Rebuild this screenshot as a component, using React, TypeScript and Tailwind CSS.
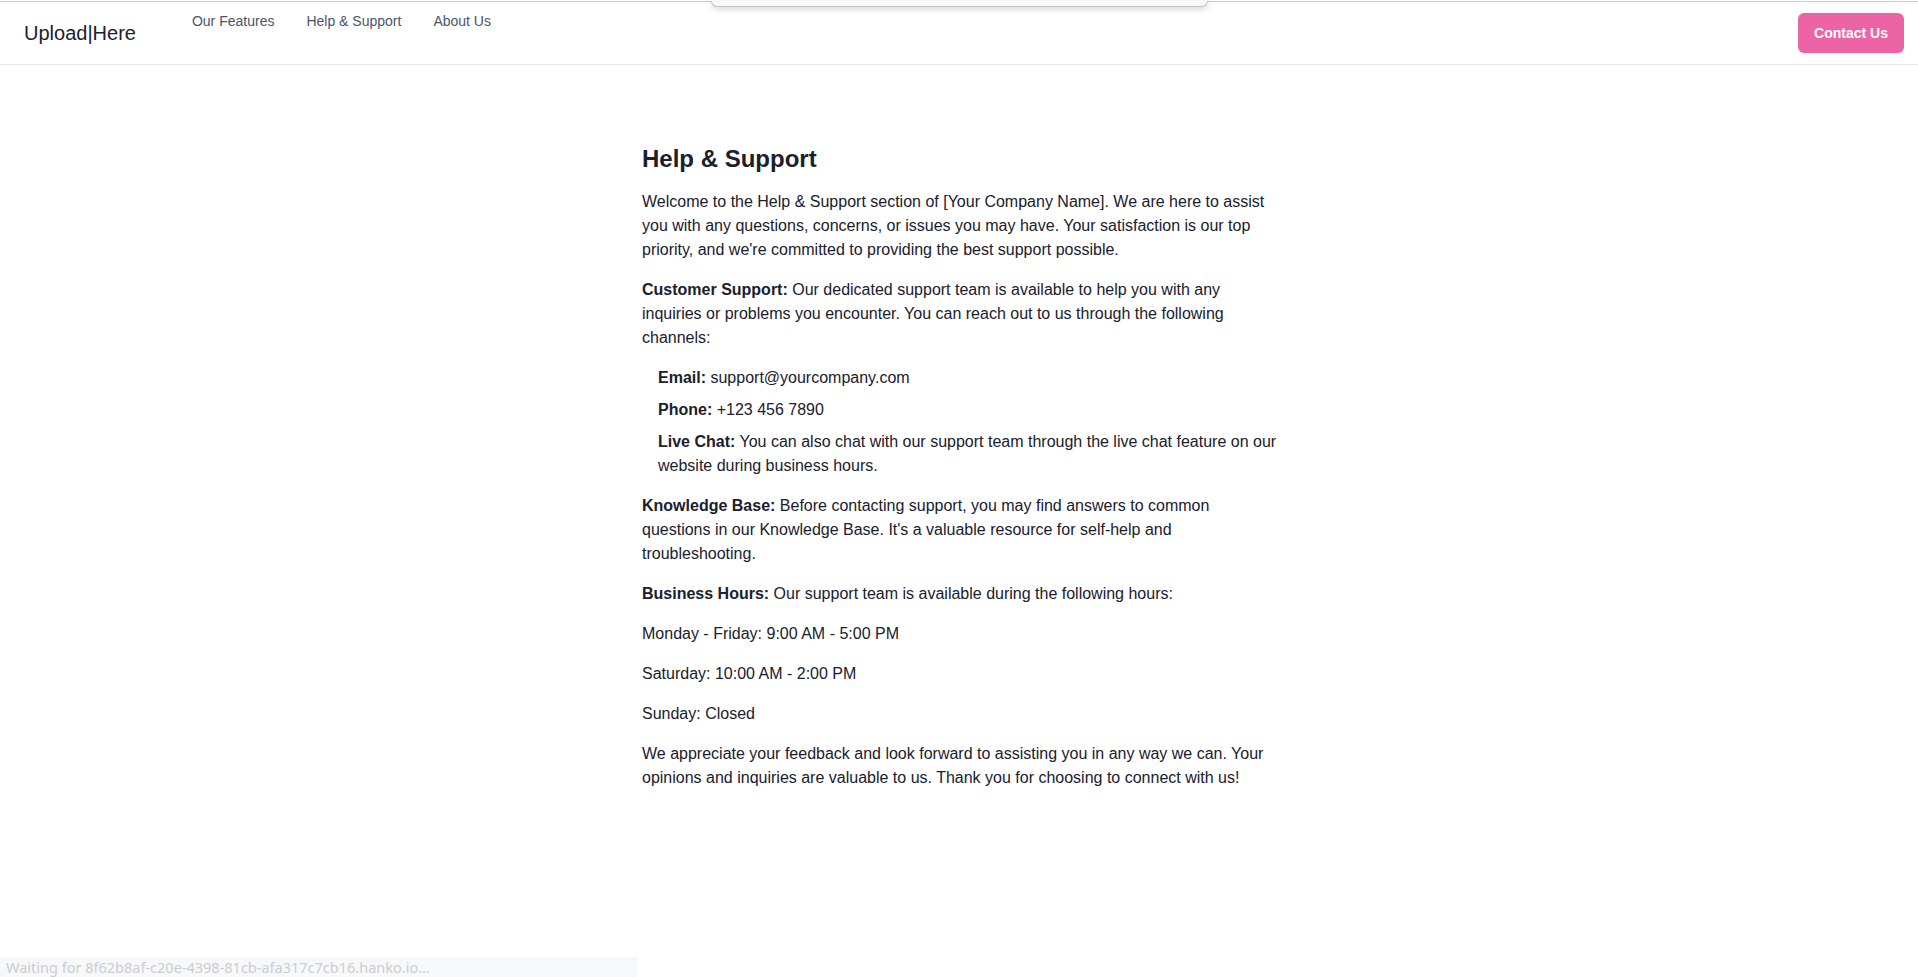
import React from "react";

export default function App() {
  const font = { fontFamily: '"Liberation Sans", Arial, Helvetica, sans-serif' };
  return (
    <div className="relative min-h-[977px] bg-white text-[#1A202C]" style={font}>
      {/* browser top line */}
      <div className="h-px mt-px bg-[#c9c9c9]" />
      {/* popup remnant */}
      <div className="absolute left-[711px] top-0 w-[497px] h-[6px] bg-[#f9f9f9] border-b border-x border-[#c4c4c4] rounded-b-[6px] shadow-[0_2px_6px_rgba(0,0,0,0.18)]" />

      {/* header */}
      <header className="h-[63px] border-b border-[#E2E8F0] flex items-center pl-[24px] pr-[14px]">
        <div className="text-[20px] leading-[28px] text-[#1A202C]">Upload|Here</div>
        <nav className="self-start pt-px ml-[48px] flex gap-4">
          {["Our Features", "Help & Support", "About Us"].map((t) => (
            <a key={t} className="p-2 text-[14px] leading-[20px] text-[#4A5568]" href="#">
              {t}
            </a>
          ))}
        </nav>
        <div className="flex-1" />
        <button className="h-[40px] w-[106px] rounded-md bg-[#ED64A6] text-white text-[14px] font-bold">
          Contact Us
        </button>
      </header>

      {/* content */}
      <main className="pt-20 pl-[2px] flex justify-center">
        <div className="w-[636px] text-[16px] leading-[24px]">
          <h2 className="text-[24px] leading-[28.8px] font-bold mb-4">Help &amp; Support</h2>
          <p className="mb-4">
            Welcome to the Help &amp; Support section of [Your Company Name]. We are here to assist you with any
            questions, concerns, or issues you may have. Your satisfaction is our top priority, and we're committed
            to providing the best support possible.
          </p>
          <p className="mb-4">
            <strong>Customer Support:</strong> Our dedicated support team is available to help you with any
            inquiries or problems you encounter. You can reach out to us through the following channels:
          </p>
          <ul className="ml-4 mb-4 flex flex-col gap-2">
            <li>
              <strong>Email:</strong> support@yourcompany.com
            </li>
            <li>
              <strong>Phone:</strong> +123 456 7890
            </li>
            <li>
              <strong>Live Chat:</strong> You can also chat with our support team through the live chat feature on
              our website during business hours.
            </li>
          </ul>
          <p className="mb-4">
            <strong>Knowledge Base:</strong> Before contacting support, you may find answers to common questions in
            our Knowledge Base. It's a valuable resource for self-help and troubleshooting.
          </p>
          <p className="mb-4">
            <strong>Business Hours:</strong> Our support team is available during the following hours:
          </p>
          <p className="mb-4">Monday - Friday: 9:00 AM - 5:00 PM</p>
          <p className="mb-4">Saturday: 10:00 AM - 2:00 PM</p>
          <p className="mb-4">Sunday: Closed</p>
          <p className="mb-4">
            We appreciate your feedback and look forward to assisting you in any way we can. Your opinions and
            inquiries are valuable to us. Thank you for choosing to connect with us!
          </p>
        </div>
      </main>

      {/* status bubble */}
      <div
        className="absolute left-0 top-[956px] w-[638px] h-[21px] bg-[#f7f8f9] flex items-center pl-[6px] text-[14.5px] text-[#cbcdcf]"
        style={{ fontFamily: '"Noto Sans", "DejaVu Sans", sans-serif' }}
      >
        Waiting for 8f62b8af-c20e-4398-81cb-afa317c7cb16.hanko.io…
      </div>
    </div>
  );
}
